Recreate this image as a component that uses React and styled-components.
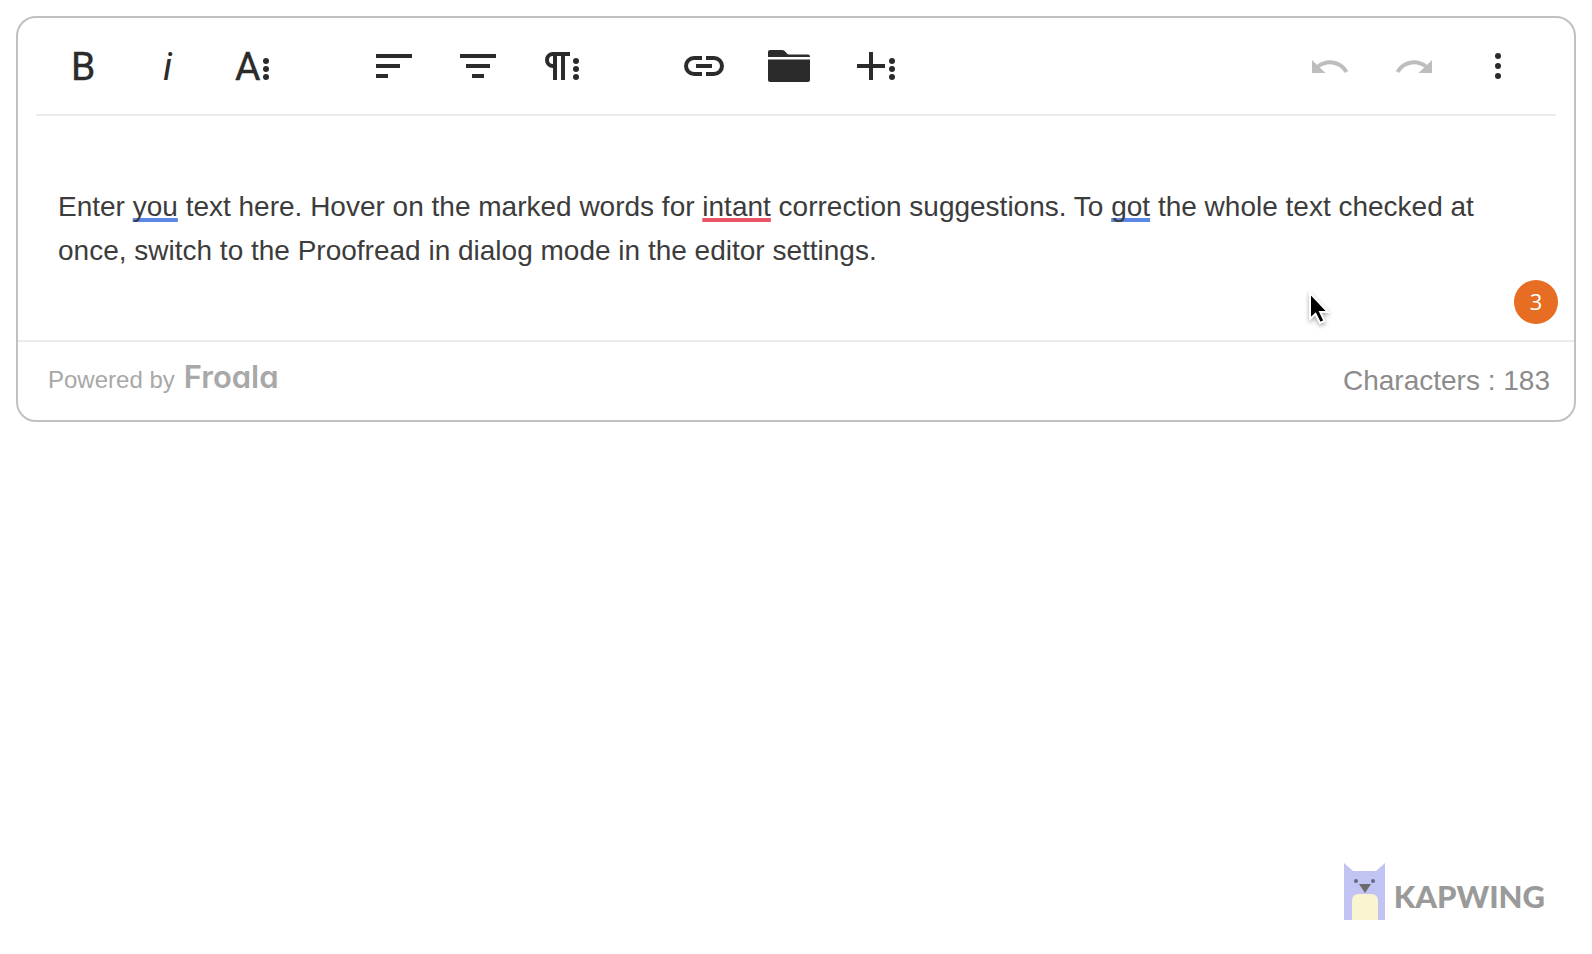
import React from 'react'
import styled, { createGlobalStyle } from 'styled-components'

const GlobalStyle = createGlobalStyle`
  * {
    box-sizing: border-box;
  }
  body {
    margin: 0;
    background: #fff;
    font-family: "Liberation Sans", Arial, sans-serif;
  }
`

const Page = styled.div`
  display: flex;
  flex-direction: column;
  justify-content: space-between;
  min-height: 100vh;
  padding: 16px;
`

const Editor = styled.main`
  border: 2px solid #c1c1c1;
  border-radius: 20px;
`

const Toolbar = styled.div`
  display: flex;
  align-items: center;
  justify-content: space-between;
  height: 98px;
  margin: 0 18px;
  padding: 0 16px 0 5px;
  border-bottom: 2px solid #ebebeb;
`

const Groups = styled.div`
  display: flex;
  gap: 59px;
`

const Group = styled.div`
  display: flex;
`

const ToolButton = styled.button`
  display: flex;
  align-items: center;
  justify-content: center;
  width: 84px;
  height: 76px;
  padding: 0;
  border: 0;
  background: none;
  color: #2b2b2b;
  cursor: pointer;

  &:disabled {
    color: #bdbdbd;
    cursor: default;
  }
`

const Svg = styled.svg`
  display: block;
  width: 48px;
  height: 48px;
  fill: currentColor;
`

const Letter = styled.text`
  font-family: Roboto, sans-serif;
  font-size: 39px;
  font-style: ${props => (props.$italic ? 'italic' : 'normal')};
  stroke: currentColor;
  stroke-width: ${props => (props.$italic ? 0 : 0.4)};
`

const Content = styled.div`
  position: relative;
  min-height: 224px;
  padding: 69px 40px 67px;
`

const Text = styled.div`
  font-size: 28px;
  line-height: 44px;
  color: #3c3c3c;
  outline: none;
`

const Mark = styled.span`
  text-decoration: underline 4px ${props => (props.$spelling ? '#e95466' : '#5b88e4')};
  text-decoration-skip-ink: none;
  text-underline-offset: 2px;
`

const Badge = styled.button`
  position: absolute;
  right: 16px;
  bottom: 16px;
  width: 44px;
  height: 44px;
  padding: 0 0 2px;
  border: 0;
  border-radius: 50%;
  background: #e66d22;
  color: #fff;
  font-family: "Open Sans", sans-serif;
  font-size: 22px;
  line-height: 42px;
`

const Pointer = styled.svg`
  position: absolute;
  right: 241px;
  bottom: 10px;
  width: 28px;
  height: 42px;
  filter: drop-shadow(0 2px 2px rgba(0, 0, 0, 0.35));
`

const StatusBar = styled.footer`
  display: flex;
  align-items: center;
  justify-content: space-between;
  height: 80px;
  padding: 0 24px 0 30px;
  border-top: 2px solid #ebebeb;
`

const Powered = styled.a`
  display: flex;
  align-items: baseline;
  gap: 9px;
  padding-bottom: 6px;
  color: #a8a8a8;
  font-size: 24px;
  line-height: 40px;
  text-decoration: none;
`

const FroalaName = styled.span`
  font-family: Inter, sans-serif;
  font-size: 31px;
  font-weight: 600;
  font-feature-settings: "cv11";
`

const Counter = styled.span`
  color: #8c8c8c;
  font-size: 28px;
  line-height: 40px;
`

const Watermark = styled.div`
  display: flex;
  align-items: center;
  align-self: flex-end;
  gap: 9px;
  margin: 0 31px 18px 0;
`

const WatermarkName = styled.span`
  padding-top: 8px;
  color: #9a9a9a;
  font-family: Lato, sans-serif;
  font-size: 31px;
  font-weight: 900;
  line-height: 48px;
`

const Cat = styled.svg`
  width: 41px;
  height: 57px;
`

const Dots = ({ x, ys = [19, 27, 35] }) => ys.map(y => <circle key={y} cx={x} cy={y} r="3" />)

const icons = {
  bold: <Letter x="12" y="38">B</Letter>,
  italic: <Letter x="20" y="38" $italic>i</Letter>,
  moreText: (
    <>
      <Letter x="8" y="38">A</Letter>
      <Dots x={39} />
    </>
  ),
  alignLeft: <path d="M6 12h36v4H6zM6 22h24v4H6zM6 32h12v4H6z" />,
  alignCenter: <path d="M6 12h36v4H6zM12 22h24v4H12zM18 32h12v4H18z" />,
  moreParagraph: (
    <>
      <path d="M32 10H15a8 8 0 0 0 0 16v12h4V14h4v24h4V14h5zM15 14v8a4 4 0 0 1 0-8z" />
      <Dots x={38} />
    </>
  ),
  link: (
    <path
      d="M21 16h-8a8 8 0 0 0 0 16h8M25 16h8a8 8 0 0 1 0 16h-8M15 24h16"
      fill="none"
      stroke="currentColor"
      strokeWidth="4"
    />
  ),
  folder: (
    <path d="M3 15V10q0-2 2-2h12c4 0 4 4.500 7 4.500h19q2 0 2 2V15zM3 17.500h42V38q0 2-2 2H5q-2 0-2-2z" />
  ),
  moreRich: (
    <>
      <path d="M20 10h4v12h12v4H24v12h-4V26H8v-4h12z" />
      <Dots x={43} />
    </>
  ),
  undo: (
    <>
      <path d="M6 18v13h13.500z" />
      <path d="M12 24.500C20 18.500 33 18 40.500 30" fill="none" stroke="currentColor" strokeWidth="4" />
    </>
  ),
  redo: (
    <>
      <path d="M42 18v13H28.500z" />
      <path d="M36 24.500C28 18.500 15 18 7.500 30" fill="none" stroke="currentColor" strokeWidth="4" />
    </>
  ),
  moreMisc: <Dots x={24} ys={[14, 24, 34]} />,
}

const groups = [
  [['bold', 'Bold'], ['italic', 'Italic'], ['moreText', 'More Text']],
  [['alignLeft', 'Align Left'], ['alignCenter', 'Align Center'], ['moreParagraph', 'More Paragraph']],
  [['link', 'Insert Link'], ['folder', 'Insert Files'], ['moreRich', 'More Rich']],
]

function Tool({ icon, label, disabled }) {
  return (
    <ToolButton type="button" aria-label={label} disabled={disabled}>
      <Svg viewBox="0 0 48 48" aria-hidden="true">{icons[icon]}</Svg>
    </ToolButton>
  )
}

export default function App() {
  return (
    <Page>
      <GlobalStyle />
      <Editor>
        <Toolbar role="toolbar">
          <Groups>
            {groups.map((tools, i) => (
              <Group key={i}>
                {tools.map(([icon, label]) => (
                  <Tool key={icon} icon={icon} label={label} />
                ))}
              </Group>
            ))}
          </Groups>
          <Group>
            <Tool icon="undo" label="Undo" disabled />
            <Tool icon="redo" label="Redo" disabled />
            <Tool icon="moreMisc" label="More Misc" />
          </Group>
        </Toolbar>
        <Content>
          <Text
            role="textbox"
            aria-label="Editor text"
            contentEditable
            suppressContentEditableWarning
            spellCheck={false}
          >
            Enter <Mark>you</Mark> text here. Hover on the marked words for{' '}
            <Mark $spelling>intant</Mark> correction suggestions. To <Mark>got</Mark> the whole
            text checked at once, switch to the Proofread in dialog mode in the editor settings.
          </Text>
          <Pointer viewBox="0 0 28 42" aria-hidden="true">
            <path
              d="M5 5v26l5.500-5 4.500 9 4.500-2-4.300-9H23z"
              fill="#000"
              stroke="#fff"
              strokeWidth="2"
            />
          </Pointer>
          <Badge type="button" aria-label="3 problems">3</Badge>
        </Content>
        <StatusBar>
          <Powered href="#froala">
            Powered by <FroalaName>Froala</FroalaName>
          </Powered>
          <Counter>Characters : 183</Counter>
        </StatusBar>
      </Editor>
      <Watermark>
        <Cat viewBox="0 0 41 57" aria-hidden="true">
          <path d="M0 0l9 8h23l9-8v57H0z" fill="#c1c4f2" />
          <path d="M8 57V38q0-7 7-7h12q7 0 7 7v19z" fill="#f8f5d0" />
          <circle cx="12" cy="18" r="2" fill="#666a80" />
          <circle cx="29" cy="18" r="2" fill="#666a80" />
          <path d="M15 21h12l-6 9z" fill="#6b6b6b" />
        </Cat>
        <WatermarkName>KAPWING</WatermarkName>
      </Watermark>
    </Page>
  )
}
